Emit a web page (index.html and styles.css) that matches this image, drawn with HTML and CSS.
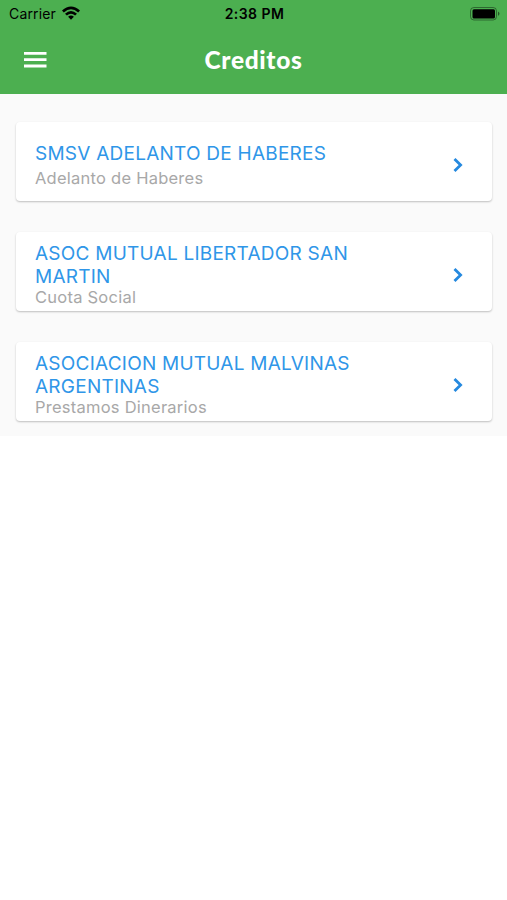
FILE: index.html
```html
<!DOCTYPE html>
<html lang="es">
<head>
<meta charset="utf-8">
<title>Creditos</title>
<link rel="stylesheet" href="styles.css">
</head>
<body>
<header class="top">
  <div class="status">
    <div class="carrier"><span class="carrier-name">Carrier</span>
      <svg class="wifi" width="18" height="14" viewBox="0 0 18 14"><path d="M0 4.6Q9-3.8 18 4.6L16.2 6.5Q9 .2 1.8 6.5ZM3 7.7Q9 2.2 15 7.7L13.1 9.6Q9 6 4.9 9.6ZM6.1 10.8Q9 8.3 11.9 10.8L9 13.8Z"/></svg>
    </div>
    <span class="clock">2:38 PM</span>
    <svg class="battery" width="30" height="14" viewBox="0 0 30 14"><rect x=".5" y=".5" width="26" height="12.5" rx="3.4" fill="none" stroke="#000" stroke-opacity=".4"/><rect x="2.5" y="2.2" width="22.5" height="9.2" rx="1.5"/><path d="M28 4.6q3 2.2 0 4.4z" fill-opacity=".5"/></svg>
  </div>
  <div class="bar">
    <svg class="menu" width="23" height="16" viewBox="0 0 23 16"><path d="M0 0h22.5v2.8H0zM0 6.3h22.5v2.8H0zM0 12.6h22.5v2.8H0z" fill="#fff"/></svg>
    <h1 class="title">Creditos</h1>
  </div>
</header>
<main class="list">
  <article class="card"><div class="text"><h2 class="name">SMSV ADELANTO DE HABERES</h2><p class="kind">Adelanto de Haberes</p></div><svg class="chevron" width="10" height="16" viewBox="0 0 10 16"><path d="M1.5 2 7.6 8l-6.1 6"/></svg></article>
  <article class="card tall"><div class="text"><h2 class="name">ASOC MUTUAL LIBERTADOR SAN MARTIN</h2><p class="kind">Cuota Social</p></div><svg class="chevron" width="10" height="16" viewBox="0 0 10 16"><path d="M1.5 2 7.6 8l-6.1 6"/></svg></article>
  <article class="card tall"><div class="text"><h2 class="name">ASOCIACION MUTUAL MALVINAS ARGENTINAS</h2><p class="kind">Prestamos Dinerarios</p></div><svg class="chevron" width="10" height="16" viewBox="0 0 10 16"><path d="M1.5 2 7.6 8l-6.1 6"/></svg></article>
</main>
</body>
</html>
```
FILE: styles.css
```css
* { box-sizing: border-box; }
body { margin: 0; background: #fff; font-family: Inter, "Liberation Sans", sans-serif; }
.top { height: 94px; background: #4caf50; }
.status { height: 27px; display: grid; grid-template-columns: 1fr auto 1fr; align-items: center; padding: 0 7px 0 9px; font-size: 14px; }
.carrier { display: flex; align-items: center; gap: 6px; letter-spacing: .15px; }
.wifi { margin-top: -2px; }
.clock { font-weight: 600; letter-spacing: .45px; }
.battery { justify-self: end; }
.bar { height: 66px; display: grid; grid-template-columns: 1fr auto 1fr; align-items: center; padding: 0 24px; }
.title { margin: 0; color: #fff; font: 900 24.5px/30px Lato, sans-serif; letter-spacing: .65px; }
.list { height: 342px; padding: 28px 15px 0 16px; background: #fafafa; display: flex; flex-direction: column; gap: 31px; }
.card { height: 79px; flex: none; padding: 6px 29px 0 19px; display: flex; justify-content: space-between; align-items: center; background: #fff; border-radius: 4px; box-shadow: 0 1px 2px rgba(0,0,0,.24); }
.text { width: 335px; padding-top: 2px; }
.name { margin: 0; color: #2f96e8; font-size: 19px; font-weight: 400; line-height: 23px; letter-spacing: .24px; }
.kind { margin: 3px 0 0; color: #a8a8a8; font-size: 16.5px; line-height: 21px; letter-spacing: .24px; }
.tall .text { padding-top: 1px; }
.tall .kind { margin-top: -1px; }
.chevron { fill: none; stroke: #2589df; stroke-width: 2.8; }
```
